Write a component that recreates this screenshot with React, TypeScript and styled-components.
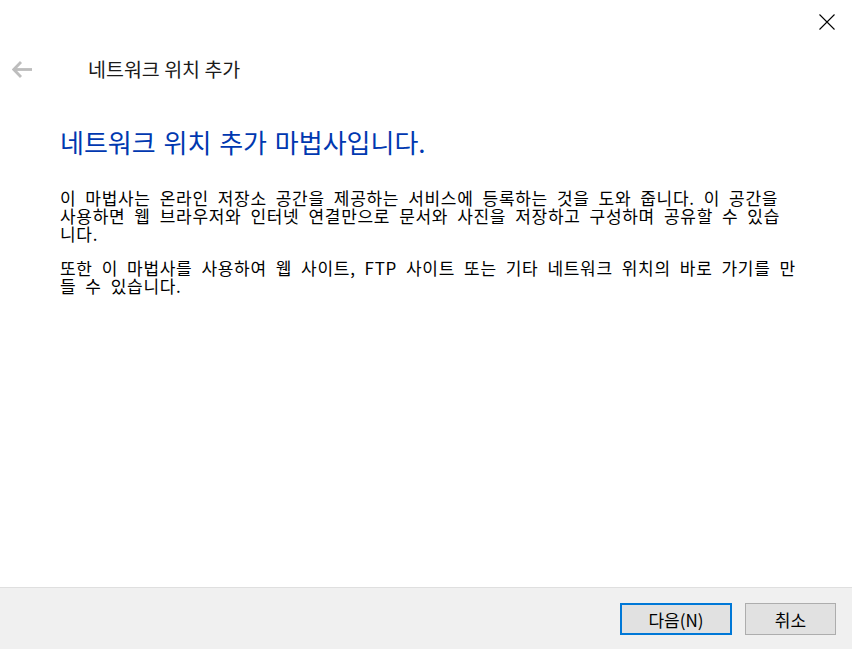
import React from "react";
import styled, { createGlobalStyle } from "styled-components";

const GlobalStyle = createGlobalStyle`
  html, body {
    margin: 0;
    padding: 0;
    background: #ffffff;
  }
  body {
    font-family: "Noto Sans CJK KR", "Noto Sans", sans-serif;
  }
`;

function BackArrow() {
  return (
    <svg width="20" height="17" viewBox="0 0 20 17">
      <path d="M9 1 L1.8 8.5 L9 16" fill="none" stroke="#bdbdbd" strokeWidth="2.8" />
      <path d="M2 8.5 H20" stroke="#bdbdbd" strokeWidth="2.8" />
    </svg>
  );
}

function CloseIcon() {
  return (
    <svg width="16" height="16" viewBox="0 0 16 16">
      <path d="M0.5 0.5 L15.5 15.5 M15.5 0.5 L0.5 15.5" stroke="#000" strokeWidth="1.1" />
    </svg>
  );
}

const bodyLines = [
  [
    "이 마법사는 온라인 저장소 공간을 제공하는 서비스에 등록하는 것을 도와 줍니다. 이 공간을",
    "사용하면 웹 브라우저와 인터넷 연결만으로 문서와 사진을 저장하고 구성하며 공유할 수 있습",
    "니다.",
  ],
  [
    "또한 이 마법사를 사용하여 웹 사이트, FTP 사이트 또는 기타 네트워크 위치의 바로 가기를 만",
    "들 수 있습니다.",
  ],
];

export default function App() {
  return (
    <>
      <GlobalStyle />
      <S.Window>
        <S.TitleBar>
          <S.CloseButton aria-label="닫기">
            <CloseIcon />
          </S.CloseButton>
        </S.TitleBar>
        <S.NavRow>
          <S.BackButton aria-label="뒤로">
            <BackArrow />
          </S.BackButton>
          <S.WindowTitle>네트워크 위치 추가</S.WindowTitle>
        </S.NavRow>
        <S.Content>
          <S.Heading>네트워크 위치 추가 마법사입니다.</S.Heading>
          {bodyLines.map((para, i) => (
            <S.Paragraph key={i}>
              {para.map((line, j) => (
                <S.Line key={j}>{line}</S.Line>
              ))}
            </S.Paragraph>
          ))}
        </S.Content>
        <S.Footer>
          <S.Button $primary $width={112}>
            다음(N)
          </S.Button>
          <S.Button $width={91}>취소</S.Button>
        </S.Footer>
      </S.Window>
    </>
  );
}

const S = {
  Window: styled.div`
    display: flex;
    flex-direction: column;
    width: 852px;
    height: 649px;
    background: #ffffff;
    overflow: hidden;
  `,
  TitleBar: styled.div`
    display: flex;
    justify-content: flex-end;
    height: 45px;
  `,
  CloseButton: styled.button`
    display: flex;
    align-items: center;
    justify-content: center;
    width: 32px;
    height: 32px;
    margin: 6px 9px 0 0;
    padding: 0;
    border: none;
    background: transparent;
  `,
  NavRow: styled.div`
    display: flex;
    align-items: center;
    height: 48px;
    padding-left: 12px;
  `,
  BackButton: styled.button`
    display: flex;
    align-items: center;
    width: 20px;
    height: 20px;
    padding: 0;
    border: none;
    background: transparent;
  `,
  WindowTitle: styled.span`
    margin-left: 56px;
    font-size: 19.5px;
    line-height: 24px;
    color: #1a1a1a;
  `,
  Content: styled.div`
    flex: 1;
    display: flex;
    flex-direction: column;
    padding: 34px 0 0 60px;
  `,
  Heading: styled.h1`
    margin: 0 0 32px;
    font-size: 26px;
    font-weight: 400;
    line-height: 30px;
    word-spacing: 2px;
    color: #0038b0;
  `,
  Paragraph: styled.p`
    margin: 0 0 16px;
    font-size: 17px;
    line-height: 18px;
    letter-spacing: 0.7px;
    word-spacing: 4.5px;
    color: #000000;
  `,
  Line: styled.span`
    display: block;
    white-space: nowrap;
  `,
  Footer: styled.div`
    display: flex;
    justify-content: flex-end;
    gap: 13px;
    height: 62px;
    padding: 15px 16px 0 0;
    box-sizing: border-box;
    background: #f0f0f0;
    border-top: 1px solid #dfdfdf;
  `,
  Button: styled.button<{ $primary?: boolean; $width: number }>`
    width: ${(p) => p.$width}px;
    height: 32px;
    box-sizing: border-box;
    padding: 0;
    background: #e1e1e1;
    border: ${(p) => (p.$primary ? "2px solid #0078d7" : "1px solid #adadad")};
    font-family: "Noto Sans CJK KR", "Noto Sans", sans-serif;
    font-size: 17px;
    color: #000000;
  `,
};
